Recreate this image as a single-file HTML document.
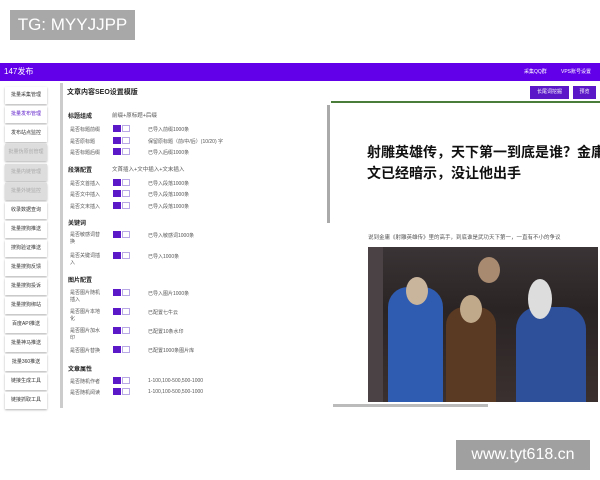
<!DOCTYPE html><html><head><meta charset="utf-8"><style>
*{margin:0;padding:0;box-sizing:border-box}
body{width:600px;height:480px;background:#fff;position:relative;overflow:hidden;font-family:"Liberation Sans","Noto Sans CJK SC",sans-serif;color:#333}
.a{position:absolute}
.tg{left:10px;top:10px;width:125px;height:30px;background:#a8a8a8;color:#fff;font-size:17px;line-height:30px;text-align:center}
.wm{left:456px;top:440px;width:134px;height:30px;background:#a0a0a0;color:#fff;font-size:16px;line-height:30px;text-align:center}
.bar{left:0;top:63px;width:600px;height:18px;background:#6200ea;color:#fff}
.side{left:0;top:81px;width:60px;height:330px}
.sb{position:absolute;left:5px;width:42px;height:17px;font-size:5px;line-height:17px;text-align:center;background:#fff;box-shadow:0 1px 2px rgba(0,0,0,.3);color:#333}
.sb.g{background:#ddd;color:#aaa}
.vline{left:60px;top:83px;width:3px;height:325px;background:#ccc}
.row{position:absolute;left:70px;font-size:5px;color:#555;white-space:nowrap}
.h{position:absolute;left:68px;font-size:6px;font-weight:bold;color:#222}
.tg2{position:absolute;left:113px;width:17px;height:7px}
.tg2 i{position:absolute;left:0;top:0;width:8px;height:7px;background:#5a18c9}
.tg2 b{position:absolute;left:9px;top:0;width:8px;height:7px;border:1px solid #b9a8e6;background:#fff}
.info{position:absolute;left:148px;font-size:5px;color:#555;white-space:nowrap}
.btn{position:absolute;height:13px;background:#5a18c9;color:#fff;font-size:5px;line-height:13px;text-align:center}
</style></head><body>
<div class="a tg">TG: MYYJJPP</div>
<div class="a bar"><span style="position:absolute;left:4px;top:3px;font-size:8px">147发布</span><span style="position:absolute;left:524px;top:5px;font-size:5px">采集QQ群</span><span style="position:absolute;left:561px;top:5px;font-size:5px">VPS账号设置</span></div>
<div class="a side">
<div class="sb" style="top:6px">批量采集管理</div>
<div class="sb" style="top:25px;color:#5a18c9">批量发布管理</div>
<div class="sb" style="top:44px">发布站点监控</div>
<div class="sb g" style="top:63px">批量伪原创管理</div>
<div class="sb g" style="top:83px">批量内链管理</div>
<div class="sb g" style="top:102px">批量外链监控</div>
<div class="sb" style="top:121px">收录数据查询</div>
<div class="sb" style="top:140px">批量搜狗推送</div>
<div class="sb" style="top:159px">搜狗验证推送</div>
<div class="sb" style="top:178px">批量搜狗反馈</div>
<div class="sb" style="top:197px">批量搜狗投诉</div>
<div class="sb" style="top:216px">批量搜狗绑站</div>
<div class="sb" style="top:235px">百度API推送</div>
<div class="sb" style="top:254px">批量神马推送</div>
<div class="sb" style="top:273px">批量360推送</div>
<div class="sb" style="top:292px">链接生成工具</div>
<div class="sb" style="top:311px">链接抓取工具</div>
</div>
<div class="a vline"></div>
<div class="a" style="left:67px;top:87px;font-size:7px;font-weight:bold;color:#222">文章内容SEO设置模版</div>
<div class="btn" style="left:530px;top:86px;width:39px">长尾词挖掘</div>
<div class="btn" style="left:573px;top:86px;width:23px">预览</div>
<div class="h" style="top:111px">标题组成</div><div class="info" style="left:112px;top:111px;font-size:5.5px">前缀+原标题+后缀</div>
<div class="row" style="top:126px">是否标题前缀</div><div class="tg2" style="top:125px"><i></i><b></b></div><div class="info" style="top:126px">已导入前缀1000条</div>
<div class="row" style="top:138px">是否原标题</div><div class="tg2" style="top:137px"><i></i><b></b></div><div class="info" style="top:138px">保留原标题（前/中/后）(10/20) 字</div>
<div class="row" style="top:149px">是否标题后缀</div><div class="tg2" style="top:148px"><i></i><b></b></div><div class="info" style="top:149px">已导入后缀1000条</div>
<div class="h" style="top:165px">段落配置</div><div class="info" style="left:112px;top:165px;font-size:5.5px">文首插入+文中插入+文末插入</div>
<div class="row" style="top:180px">是否文首插入</div><div class="tg2" style="top:179px"><i></i><b></b></div><div class="info" style="top:180px">已导入段落1000条</div>
<div class="row" style="top:191px">是否文中插入</div><div class="tg2" style="top:190px"><i></i><b></b></div><div class="info" style="top:191px">已导入段落1000条</div>
<div class="row" style="top:203px">是否文末插入</div><div class="tg2" style="top:202px"><i></i><b></b></div><div class="info" style="top:203px">已导入段落1000条</div>
<div class="h" style="top:218px">关键词</div>
<div class="row" style="top:231px">是否敏感词替<br>换</div><div class="tg2" style="top:231px"><i></i><b></b></div><div class="info" style="top:232px">已导入敏感词1000条</div>
<div class="row" style="top:252px">是否关键词插<br>入</div><div class="tg2" style="top:252px"><i></i><b></b></div><div class="info" style="top:253px">已导入1000条</div>
<div class="h" style="top:275px">图片配置</div>
<div class="row" style="top:289px">是否图片随机<br>插入</div><div class="tg2" style="top:289px"><i></i><b></b></div><div class="info" style="top:290px">已导入图片1000条</div>
<div class="row" style="top:308px">是否图片本地<br>化</div><div class="tg2" style="top:308px"><i></i><b></b></div><div class="info" style="top:309px">已配置七牛云</div>
<div class="row" style="top:327px">是否图片加水<br>印</div><div class="tg2" style="top:327px"><i></i><b></b></div><div class="info" style="top:328px">已配置10条水印</div>
<div class="row" style="top:347px">是否图片替换</div><div class="tg2" style="top:346px"><i></i><b></b></div><div class="info" style="top:347px">已配置1000条图片库</div>
<div class="h" style="top:364px">文章属性</div>
<div class="row" style="top:378px">是否随机作者</div><div class="tg2" style="top:377px"><i></i><b></b></div><div class="info" style="top:378px">1-100,100-500,500-1000</div>
<div class="row" style="top:389px">是否随机阅读</div><div class="tg2" style="top:388px"><i></i><b></b></div><div class="info" style="top:389px">1-100,100-500,500-1000</div>
<div class="a" style="left:327px;top:105px;width:3px;height:118px;background:#aaa"></div>
<div class="a" style="left:331px;top:101px;width:269px;height:2px;background:#4a7c3a"></div>
<div class="a" style="left:367px;top:142px;font-size:14px;font-weight:bold;color:#111;line-height:21px;width:240px;white-space:nowrap">射雕英雄传，天下第一到底是谁？金庸<br>文已经暗示，没让他出手</div>
<div class="a" style="left:368px;top:233px;font-size:5.5px;color:#555;white-space:nowrap">说到金庸《射雕英雄传》里的高手，到底谁是武功天下第一，一直有不小的争议</div>
<div class="a" style="left:368px;top:247px;width:230px;height:155px;background:linear-gradient(180deg,#3a3436,#2a2424 40%,#3b3030);overflow:hidden">
<div class="a" style="left:20px;top:40px;width:55px;height:115px;background:#2f5cb0;border-radius:20px 20px 0 0"></div>
<div class="a" style="left:38px;top:30px;width:22px;height:28px;background:#c9b49c;border-radius:50%"></div>
<div class="a" style="left:78px;top:60px;width:50px;height:95px;background:#5a3a22;border-radius:18px 18px 0 0"></div>
<div class="a" style="left:92px;top:48px;width:22px;height:28px;background:#c0a88a;border-radius:50%"></div>
<div class="a" style="left:110px;top:10px;width:22px;height:26px;background:#a88a70;border-radius:50%"></div>
<div class="a" style="left:148px;top:60px;width:70px;height:95px;background:#2e4f9a;border-radius:22px 22px 0 0"></div>
<div class="a" style="left:160px;top:32px;width:24px;height:40px;background:#ddd;border-radius:50%"></div>
<div class="a" style="left:0;top:0;width:15px;height:155px;background:#4a4244"></div>
</div>
<div class="a" style="left:333px;top:404px;width:155px;height:3px;background:#bbb"></div>
<div class="a wm">www.tyt618.cn</div>
</body></html>
